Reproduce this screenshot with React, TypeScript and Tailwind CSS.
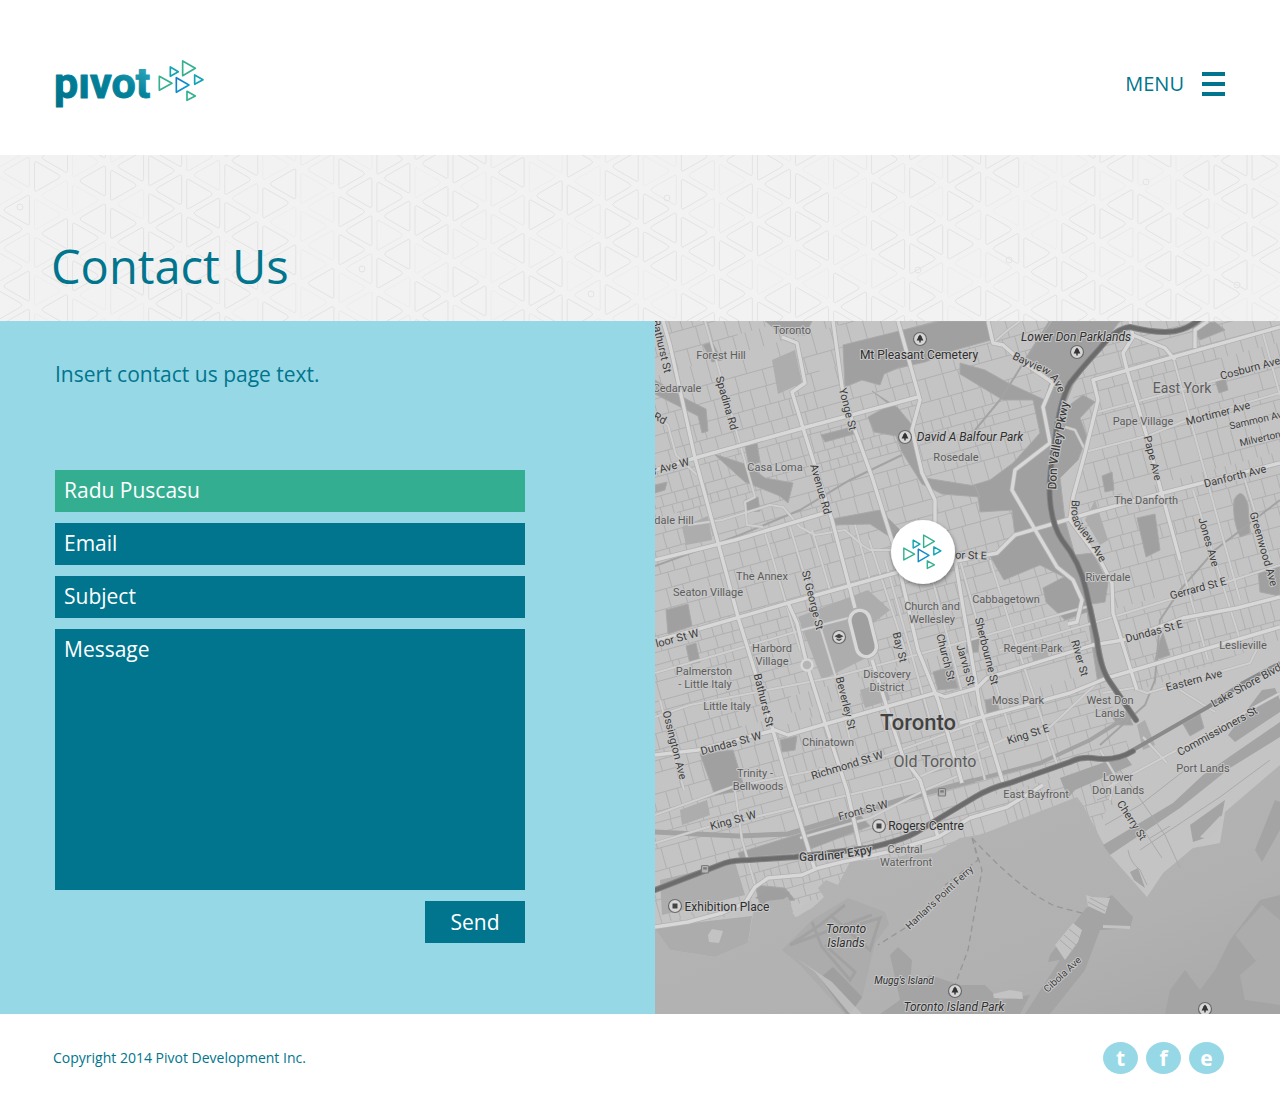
import React from "react";

type Pt = [number, number];

function seeded(seed: number) {
  let s = seed;
  return () => {
    s = (s * 16807) % 2147483647;
    return s / 2147483647;
  };
}

/* ---------- Brand triangles ---------- */

function Triangles() {
  return (
    <g fill="none" strokeWidth="5" strokeLinejoin="round">
      <path d="M428 48V92L466 70Z" stroke="#35b18f" />
      <path d="M391 66V94L415 80Z" stroke="#12a3b4" />
      <path d="M358 94V136L396 115Z" stroke="#35b18f" />
      <path d="M409 98V142L447 120Z" stroke="url(#blueTri)" />
      <path d="M464 90V118L489 104Z" stroke="#12a3b4" />
      <path d="M441 139V166L466 153Z" stroke="#35b18f" />
    </g>
  );
}

function Logo() {
  return (
    <svg className="block h-[60px] w-[150px]" viewBox="55 58 150 60" role="img" aria-label="pivot">
      <defs>
        <linearGradient id="word" x1="0" y1="1" x2="1" y2="0">
          <stop offset="0" stopColor="#00708a" />
          <stop offset="0.6" stopColor="#04839c" />
          <stop offset="1" stopColor="#41b4c8" />
        </linearGradient>
        <linearGradient id="blueTri" x1="0" y1="0" x2="1" y2="1">
          <stop offset="0" stopColor="#1479c9" />
          <stop offset="1" stopColor="#0aa0cf" />
        </linearGradient>
      </defs>
      <text
        x="54"
        y="98"
        fill="url(#word)"
        stroke="url(#word)"
        strokeWidth="1"
        strokeLinejoin="round"
        fontFamily="Roboto, sans-serif"
        fontWeight="700"
        fontSize="43"
      >
        pıvot
      </text>
      <g transform="translate(40 45) scale(0.3333)">
        <Triangles />
      </g>
    </svg>
  );
}

/* ---------- Banner texture ---------- */

const bannerShapes: { d: string; o: number }[] = [];
{
  const rnd = seeded(77);
  const shade = () => {
    const r = rnd();
    return r < 0.25 ? 0.35 : r < 0.45 ? 0.65 : 1;
  };
  for (let k = -1; k < 50; k++) {
    const x = 34.5 + 38.05 * k;
    const base = 161.5 - 14.6 * k;
    const start = base - Math.ceil((base - 110) / 38) * 38;
    for (let y = start; y < 340; y += 38) {
      bannerShapes.push({
        d: `M${x} ${y + 2}Q${x} ${y - 1} ${x + 3} ${y + 1}L${x + 24} ${y + 13}Q${x + 27} ${y + 15} ${x + 24} ${y + 17}L${x + 3} ${y + 29}Q${x} ${y + 31} ${x} ${y + 28}Z`,
        o: shade(),
      });
      const r = x + 33;
      const z = y + 19;
      bannerShapes.push({
        d: `M${r} ${z + 2}Q${r} ${z - 1} ${r - 3} ${z + 1}L${r - 24} ${z + 13}Q${r - 27} ${z + 15} ${r - 24} ${z + 17}L${r - 3} ${z + 29}Q${r} ${z + 31} ${r} ${z + 28}Z`,
        o: shade(),
      });
    }
  }
}

const bannerDots: Pt[] = [
  [20, 207], [362, 269], [591, 294], [667, 198], [918, 270], [1009, 260], [1146, 182], [1237, 285],
];

function BannerTexture() {
  return (
    <svg
      className="absolute inset-0 h-full w-full"
      viewBox="0 155 1280 166"
      preserveAspectRatio="xMidYMid slice"
      aria-hidden="true"
    >
      <g fill="none" stroke="#e3e3e3" strokeWidth="1">
        {bannerShapes.map((s, i) => (
          <path key={i} d={s.d} opacity={s.o} />
        ))}
        {bannerDots.map(([x, y]) => (
          <circle key={x} cx={x} cy={y} r="3" />
        ))}
      </g>
    </svg>
  );
}

/* ---------- Map ---------- */

function streetGrid(seed: number, angle: number, cx: number, cy: number, half: number, rowMin: number, rowMax: number) {
  const rnd = seeded(seed);
  const a = (angle * Math.PI) / 180;
  const ux = Math.cos(a), uy = Math.sin(a);
  const pt = (u: number, v: number) =>
    `${(cx + u * ux - v * uy).toFixed(1)} ${(cy + u * uy + v * ux).toFixed(1)}`;
  let d = "";
  let v = -half;
  while (v < half) {
    const h = rowMin + rnd() * (rowMax - rowMin);
    let u = -half;
    while (u < half) {
      const len = 40 + rnd() * 150;
      if (rnd() < 0.88) d += `M${pt(u, v)}L${pt(u + len, v)}`;
      u += len;
    }
    u = -half + rnd() * 10;
    const gap = 6 + rnd() * 9;
    while (u < half) {
      if (rnd() < 0.85) d += `M${pt(u, v)}L${pt(u, v + h)}`;
      u += gap + rnd() * 6;
    }
    v += h;
  }
  return d;
}

const gridWest = streetGrid(11, -15.5, 850, 560, 470, 9, 24);
const gridEast = streetGrid(29, -15, 1180, 520, 420, 8, 26);

const parks = [
  "M843 345L940 321H988L991 340L955 350L925 362L898 368L884 374L880 385L862 380L845 387Z",
  "M1052 321H1120L1095 353L1073 385L1063 410L1083 395L1095 402L1080 418L1087 437L1078 460L1060 478L1065 520L1075 555L1093 553L1108 583L1105 602L1092 604L1099 640L1108 680L1098 684L1087 612L1065 620L1046 602L1043 588L1064 577L1040 565L1004 580L990 556L1015 536L1012 510L980 512L978 497L960 489L990 480L1013 463L1040 433L1033 400L1003 400L960 374L960 363L985 370L1008 383L1045 400L1050 382L1027 357Z",
  "M872 391L898 408L912 425L925 478L975 486L980 497L942 494L922 484L902 452L896 436L874 432L868 417L890 405Z",
  "M655 380L688 400L706 409L708 431L702 433L698 416L655 394Z",
  "M714 454L748 465L765 478L793 483L788 503L780 496L745 482Z",
  "M821 435L852 427L854 434L825 442Z",
  "M745 446L757 443L760 462L749 466Z",
  "M745 500L758 497L760 511L746 512Z",
  "M832 519L880 510L900 530L898 542L870 524L834 525Z",
  "M666 610L688 604L692 626L668 634Z",
  "M686 646L696 643L700 662L690 664Z",
  "M700 754L733 750L745 790L715 795Z",
  "M780 740L797 736L795 750L782 752Z",
  "M1137 518L1155 514L1160 550L1146 557Z",
  "M1102 476L1112 472L1114 490L1105 492Z",
  "M1234 500Q1242 485 1248 505L1250 533L1240 537Q1232 520 1234 500Z",
  "M1258 572L1280 565V596L1260 592Z",
  "M1183 724L1200 714L1204 728L1190 736Z",
  "M933 672L952 666L958 688L938 690Z",
  "M967 640L980 636L978 652L966 653Z",
  "M738 853L860 815L870 826L800 853L740 858Z",
  "M765 321H812L805 335L780 333Z",
  "M703 345L712 342L722 360L712 362Z",
  "M1215 380L1225 377L1228 390L1219 393Z",
  "M1190 325L1215 322L1225 330L1200 340Z",
  "M755 885L785 888L795 900L760 905Z",
  "M1107 710L1127 712L1133 725L1118 725Z",
  "M1160 640L1163 633L1170 655L1155 660Z",
  "M655 485L667 482L665 490L655 493Z",
  "M985 700L995 698L1000 712L987 714Z",
];

const softParks = [
  "M772 360L795 350L802 383L778 394Z",
  "M682 527L708 516L712 540L686 545Z",
  "M798 617L868 590L890 610L872 624L876 653L822 680L802 627Z",
  "M680 810L707 800L710 815L682 825Z",
  "M660 880L735 862L745 895L662 915Z",
  "M1137 725L1145 720L1155 745L1143 750Z",
  "M1030 650L1045 645L1050 660L1034 664Z",
  "M1095 500L1108 540L1100 545L1085 520Z",
  "M860 690L885 682L890 700L865 708Z",
];

const thinRoads = [
  "M705 321L738 437L755 497L745 502L747 525L763 527",
  "M688 525L722 520L770 505L783 507L800 527L815 535L845 530L862 545L870 550L895 550",
  "M765 533L800 650M790 527L812 600L836 678L850 740",
  "M655 673L802 630L852 617",
  "M655 717L690 705L835 677L945 647L1093 605",
  "M812 530L830 590M855 525L870 580",
  "M869 540L905 650M885 560L930 720",
  "M1173 357L1207 480L1240 600M1262 330L1280 395",
  "M1098 412L1217 380L1280 362",
  "M1085 452L1150 435L1187 420L1280 393",
  "M1000 650L1093 623L1227 582L1280 565",
  "M1180 560L1208 660M1193 490L1215 560L1240 640M1245 480L1270 560",
  "M960 560L985 650L1010 730M990 560L1015 640L1058 767M930 570L985 780",
  "M1103 693L1133 688L1147 693L1250 663L1260 643",
  "M1103 790L1177 750L1280 693",
  "M1143 737L1167 763M1100 750L1115 775L1110 800",
  "M735 790L742 840L755 885",
  "M655 815L732 787L882 757L975 723",
  "M655 843L708 827L755 817L912 780L1010 737L1050 727L1097 683",
  "M800 838L870 818L925 790L960 775",
  "M655 415L668 425L676 455L697 475",
  "M993 343L1008 330L1020 321M1065 427L1075 430L1085 450",
  "M660 700L684 790M1180 690L1215 712",
];

const majorRoads = [
  "M663 321L670 345L695 458L720 550L738 617L772 727L790 790L815 870",
  "M782 337L797 343L805 383L792 392L803 428L832 520L855 608",
  "M872 660L895 733L903 757L920 780L938 837",
  "M833 321L842 387L855 430L872 477L895 550L918 650L938 700L962 783",
  "M898 321L920 400L912 430L922 473L935 500V525L945 550",
  "M655 470L695 458L803 428L918 397",
  "M655 560L735 540L828 512",
  "M655 641L695 630L788 603L895 573L997 553L1015 535L1093 512L1163 493L1280 463",
  "M788 603L797 623L807 665L825 723L847 790L860 847",
  "M655 755L698 750L775 730L788 735L822 725L935 693L945 697L977 688L987 678L1093 645L1123 640L1183 618L1237 608L1280 597",
  "M960 723L1070 693L1107 678L1280 627",
  "M1130 321L1133 337L1123 353L1127 370L1147 437L1160 487L1180 560",
  "M1280 327L1173 357L1093 380L1098 400L1085 453L1073 497L1070 520L1100 560L1112 583L1113 613L1137 690",
  "M1133 335L1165 348L1175 360M1208 321L1195 330L1195 348",
  "M988 321L993 343L1003 345L1020 360L1053 383L1043 407L1050 443L1015 470L1012 490L1037 533L1057 567L1073 580L1082 600L1077 622L1068 624",
  "M955 560L980 707L1003 783",
  "M655 927L688 922L722 913L745 903L755 887L768 878L802 875L818 868L842 862L888 852L938 837L970 818L1007 807L1043 785",
];

const highways = [
  "M1200 319Q1185 332 1165 332Q1150 332 1130 327Q1115 329 1100 348Q1080 370 1070 383Q1060 400 1055 440Q1048 480 1050 500Q1052 525 1062 540Q1080 562 1086 590L1097 640Q1100 668 1110 682L1136 720",
  "M650 892L725 863Q735 860 750 860L795 857L868 848Q905 840 920 830L975 797Q990 788 1010 783L1070 762Q1080 757 1092 758Q1115 762 1133 751",
];

const streetLabels: { t: string; x: number; y: number; r: number; s?: number }[] = [
  { t: "Bathurst St", x: 662, y: 346, r: 77 },
  { t: "Spadina Rd", x: 727, y: 403, r: 74 },
  { t: "Yonge St", x: 848, y: 409, r: 76 },
  { t: "Avenue Rd", x: 821, y: 489, r: 74 },
  { t: "r Ave W", x: 671, y: 466, r: -15 },
  { t: "Rd", x: 660, y: 418, r: 28 },
  { t: "St George St", x: 813, y: 600, r: 76 },
  { t: "loor St W", x: 677, y: 638, r: -15 },
  { t: "Bay St", x: 900, y: 647, r: 76 },
  { t: "Church St", x: 946, y: 657, r: 76 },
  { t: "Jarvis St", x: 966, y: 665, r: 74 },
  { t: "Sherbourne St", x: 987, y: 651, r: 76 },
  { t: "River St", x: 1080, y: 658, r: 74 },
  { t: "Bathurst St", x: 764, y: 700, r: 76 },
  { t: "Beverley St", x: 846, y: 703, r: 76 },
  { t: "Ossington Ave", x: 675, y: 745, r: 76 },
  { t: "Dundas St W", x: 731, y: 743, r: -15 },
  { t: "Richmond St W", x: 847, y: 765, r: -17 },
  { t: "King St W", x: 733, y: 820, r: -15 },
  { t: "Front St W", x: 863, y: 810, r: -15 },
  { t: "King St E", x: 1028, y: 734, r: -18 },
  { t: "Dundas St E", x: 1154, y: 631, r: -15 },
  { t: "Gerrard St E", x: 1198, y: 588, r: -15 },
  { t: "Eastern Ave", x: 1194, y: 680, r: -15 },
  { t: "Lake Shore Blvd", x: 1246, y: 685, r: -29 },
  { t: "Commissioners St", x: 1217, y: 731, r: -29 },
  { t: "Cherry St", x: 1132, y: 820, r: 57 },
  { t: "Cosburn Ave", x: 1250, y: 368, r: -15 },
  { t: "Mortimer Ave", x: 1218, y: 413, r: -15 },
  { t: "Sammon Ave", x: 1258, y: 419, r: -13, s: 10 },
  { t: "Milverton", x: 1260, y: 438, r: -13, s: 10 },
  { t: "Pape Ave", x: 1153, y: 458, r: 76 },
  { t: "Danforth Ave", x: 1235, y: 476, r: -14 },
  { t: "Jones Ave", x: 1209, y: 542, r: 74 },
  { t: "Greenwood Ave", x: 1264, y: 549, r: 74 },
  { t: "or St E", x: 971, y: 555, r: 2 },
  { t: "Hanlan's Point Ferry", x: 939, y: 897, r: -43, s: 10 },
  { t: "Cibola Ave", x: 1062, y: 974, r: -43, s: 10 },
];

const areaLabels: { t: string; x: number; y: number; s?: number }[] = [
  { t: "Toronto", x: 792, y: 330 },
  { t: "Forest Hill", x: 721, y: 355 },
  { t: "Cedarvale", x: 677, y: 388 },
  { t: "Casa Loma", x: 775, y: 467 },
  { t: "dale Hill", x: 674, y: 520 },
  { t: "Rosedale", x: 956, y: 457 },
  { t: "East York", x: 1182, y: 388, s: 14 },
  { t: "Pape Village", x: 1143, y: 421 },
  { t: "The Danforth", x: 1146, y: 500 },
  { t: "The Annex", x: 762, y: 576 },
  { t: "Seaton Village", x: 708, y: 592 },
  { t: "Riverdale", x: 1108, y: 577 },
  { t: "Cabbagetown", x: 1006, y: 599 },
  { t: "Church and", x: 932, y: 606 },
  { t: "Wellesley", x: 932, y: 619 },
  { t: "Harbord", x: 772, y: 648 },
  { t: "Village", x: 772, y: 661 },
  { t: "Palmerston", x: 704, y: 671 },
  { t: "- Little Italy", x: 705, y: 684 },
  { t: "Little Italy", x: 727, y: 706 },
  { t: "Discovery", x: 887, y: 674 },
  { t: "District", x: 887, y: 687 },
  { t: "Regent Park", x: 1033, y: 648 },
  { t: "Leslieville", x: 1243, y: 645 },
  { t: "Moss Park", x: 1018, y: 700 },
  { t: "West Don", x: 1110, y: 700 },
  { t: "Lands", x: 1110, y: 713 },
  { t: "Chinatown", x: 828, y: 742 },
  { t: "Old Toronto", x: 935, y: 762, s: 16 },
  { t: "Trinity -", x: 755, y: 773 },
  { t: "Bellwoods", x: 758, y: 786 },
  { t: "East Bayfront", x: 1036, y: 794 },
  { t: "Lower", x: 1118, y: 777 },
  { t: "Don Lands", x: 1118, y: 790 },
  { t: "Port Lands", x: 1203, y: 768 },
  { t: "Central", x: 905, y: 849 },
  { t: "Waterfront", x: 906, y: 862 },
];

const poiLabels: { t: string; x: number; y: number; i?: boolean; s?: number }[] = [
  { t: "Mt Pleasant Cemetery", x: 919, y: 355 },
  { t: "Rogers Centre", x: 926, y: 826 },
  { t: "Exhibition Place", x: 727, y: 907 },
  { t: "Lower Don Parklands", x: 1076, y: 337, i: true },
  { t: "David A Balfour Park", x: 970, y: 437, i: true },
  { t: "Toronto", x: 846, y: 929, i: true },
  { t: "Islands", x: 846, y: 943, i: true },
  { t: "Mugg's Island", x: 904, y: 980, i: true, s: 10 },
  { t: "Toronto Island Park", x: 954, y: 1007, i: true },
];

const treePins: Pt[] = [[920, 339], [1077, 352], [905, 437], [955, 991], [1205, 1009]];
const squarePins: Pt[] = [[879, 826], [675, 906]];
const stationPins: Pt[] = [[705, 869], [942, 792]];

function TorontoMap() {
  return (
    <svg
      className="block h-full w-full"
      viewBox="655 321 625 693"
      preserveAspectRatio="xMidYMid slice"
      role="img"
      aria-label="Map of Toronto"
    >
      <defs>
        <clipPath id="west">
          <path d="M655 321H1050L1035 440L1010 480L1060 560L1110 700L1130 750L1090 850L655 930Z" />
        </clipPath>
        <clipPath id="east">
          <path d="M1120 321H1280V640L1140 690L1108 600L1075 520L1085 440L1070 385Z" />
        </clipPath>
        <linearGradient id="lake" x1="0" y1="0" x2="1" y2="1">
          <stop offset="0" stopColor="#a9a9a9" />
          <stop offset="0.35" stopColor="#b3b3b3" />
          <stop offset="0.7" stopColor="#b1b1b1" />
          <stop offset="1" stopColor="#a8a8a8" />
        </linearGradient>
        <filter id="shadow" x="-30%" y="-30%" width="160%" height="160%">
          <feDropShadow dx="1" dy="2" stdDeviation="2" floodOpacity="0.4" />
        </filter>
        <path id="bayview" d="M1009 357Q1030 368 1042 372Q1056 380 1059 396" />
        <path id="broadview" d="M1073 494Q1068 518 1078 530Q1092 545 1103 568" />
        <path id="dvp" d="M1056 496L1057 465L1070 396" />
        <path id="gardiner" d="M795 861Q830 862 877 852" />
      </defs>

      <rect x="655" y="321" width="625" height="693" fill="#c4c4c4" />

      <g fill="none" stroke="#b0b0b0" strokeWidth="1">
        <path d={gridWest} clipPath="url(#west)" />
        <path d={gridEast} clipPath="url(#east)" />
      </g>

      <g fill="#adadad">
        {softParks.map((d) => <path key={d} d={d} />)}
      </g>
      <g fill="#a0a0a0" stroke="#a9a9a9" strokeWidth="1">
        {parks.map((d) => <path key={d} d={d} />)}
      </g>

      {/* railway corridors */}
      <g fill="none" stroke="#a3a3a3">
        <path strokeWidth="2" d="M655 566L740 535L800 510L850 480L902 455" />
        <path strokeWidth="2" d="M1050 321L1000 400L975 430M1280 500L1215 550L1180 590L1160 620L1155 680L1145 705L1100 745" />
        <path strokeWidth="5" d="M655 832L738 836L788 834L900 800L975 780" />
        <path strokeWidth="4" d="M975 780L1040 763L1090 740L1130 715" />
      </g>

      {/* lake */}
      <path
        fill="url(#lake)"
        d="M655 929L670 950L715 957L748 943L753 913L768 900L788 897L795 917L812 908L824 897L818 888L826 880L838 885L850 862L935 853L960 838L972 836L980 835L1018 820L1077 797L1083 805L1103 843L1110 855L1147 897L1163 873L1193 848L1220 843L1225 812L1280 765V1014H655Z"
      />
      <g fill="#a4a4a4">
        <path d="M1103 845L1173 803L1203 775L1280 722V737L1230 768L1180 808L1110 855Z" />
        <path d="M1060 778L1125 755L1132 765L1075 790L1068 798Z" />
        <path d="M1228 735L1262 690L1275 688L1280 700V712L1235 742Z" />
        <path d="M1190 825L1225 800L1222 815L1205 838L1193 842Z" />
        <path d="M1130 872L1138 868L1145 888L1134 880Z" />
        <path d="M1255 850L1275 800L1280 802V830L1262 862Z" />
        <path d="M1230 940L1260 900L1280 895V960L1262 950L1245 980L1280 1000V1014H1165L1170 990L1185 970L1200 990L1215 970Z" />
        <path d="M890 955L898 947L912 960L910 985L930 975L960 985L985 985L1000 1000L1030 995L1020 1014H880L900 1000Z" />
        <path d="M1086 908L1112 895L1133 917L1130 928L1100 930L1085 970L1050 1014H1025L1060 960L1048 962L1050 955Z" />
      </g>
      <g fill="#acacac">
        <path d="M655 929L670 950L715 957L748 943L752 916L700 922Z" />
        <path d="M782 950L812 920L848 898L885 912L889 924L875 943L862 998L850 1014H845L800 965Z" />
        <path d="M1235 935L1262 905L1280 920V950L1255 960Z" />
        <path d="M1240 975L1280 940V1005L1245 1000Z" />
      </g>
      <g fill="#9f9f9f">
        <path d="M820 978L833 967L862 997L850 1014H846Z" />
        <path d="M755 898L768 890L790 892L784 899L766 901Z" />
      </g>
      <g fill="none" stroke="#a2a2a2" strokeWidth="3">
        <path d="M790 945L872 915M790 945L820 925L845 905M812 922L822 947L850 980L855 972L825 945M830 915L870 950L880 918L840 930" />
      </g>
      <g fill="#c3c3c3">
        <path d="M796 958L815 972L850 1014H862L832 982Z" opacity="0.8" />
        <path d="M792 913L812 900L818 903L797 917Z" />
        <path d="M708 935L712 929L723 931L719 943L709 942Z" />
        <path d="M1086 895L1092 897L1110 898L1105 914L1088 906Z" />
        <path d="M1055 945L1073 923L1082 930L1078 942L1065 960Z" />
        <path d="M1103 925L1130 926V929L1103 928Z" />
        <path d="M1200 837L1220 816L1224 820L1210 840Z" />
        <path d="M993 994L1010 990L1022 992L1023 999L994 998Z" />
      </g>
      <g fill="none" stroke="#aaaaaa" strokeWidth="1">
        <path d="M1060 940L1073 951M1064 935L1077 946M1069 929L1080 938M1090 898L1107 907M1088 902L1105 911" />
        <path d="M1120 770L1165 835L1180 868M1140 850L1220 797L1270 760M1128 850Q1130 862 1140 870L1147 885M1097 800L1110 795L1112 805M1145 832L1162 858M1150 838L1170 826M1105 825L1140 805L1185 770" />
      </g>
      <path
        fill="none"
        stroke="#969696"
        strokeWidth="1.3"
        strokeDasharray="6 4"
        d="M972 838L982 870L968 950L955 985M972 838L978 860L945 885M905 928L878 945M972 838Q1020 890 1055 906L1085 914"
      />

      {/* streets */}
      <g fill="none" strokeLinejoin="round">
        <g stroke="#b4b4b4" strokeWidth="3">
          {thinRoads.map((d) => <path key={d} d={d} />)}
        </g>
        <g stroke="#d0d0d0" strokeWidth="2">
          {thinRoads.map((d) => <path key={d} d={d} />)}
        </g>
        <g stroke="#b1b1b1" strokeWidth="5">
          {majorRoads.map((d) => <path key={d} d={d} />)}
          <rect x="853" y="610" width="20" height="47" rx="10" transform="rotate(-14 863 633)" />
        </g>
        <g stroke="#d8d8d8" strokeWidth="3.4">
          {majorRoads.map((d) => <path key={d} d={d} />)}
          <rect x="853" y="610" width="20" height="47" rx="10" transform="rotate(-14 863 633)" fill="#9f9f9f" />
          <circle cx="807" cy="665" r="5.5" fill="#b5b5b5" strokeWidth="2.4" />
        </g>
        <path stroke="#8a8a8a" d="M1133 750L1208 707L1243 683L1280 663" strokeWidth="4" />
        <g stroke="#858585" strokeWidth="6" strokeLinecap="round">
          {highways.map((d) => <path key={d} d={d} />)}
        </g>
        <g stroke="#6c6c6c" strokeWidth="4" strokeLinecap="round">
          {highways.map((d) => <path key={d} d={d} />)}
        </g>
      </g>

      {/* labels */}
      <g
        fontFamily="Roboto, sans-serif"
        textAnchor="middle"
        stroke="#c8c8c8"
        strokeWidth="2"
        strokeLinejoin="round"
        style={{ paintOrder: "stroke" }}
      >
        <g fill="#3c3c3c" fontSize="11">
          {streetLabels.map((l) => (
            <text key={l.t + l.x} fontSize={l.s ?? 11} transform={`translate(${l.x} ${l.y}) rotate(${l.r})`} y="4">
              {l.t}
            </text>
          ))}
          <text><textPath href="#bayview" startOffset="50%">Bayview Ave</textPath></text>
          <text><textPath href="#broadview" startOffset="50%">Broadview Ave</textPath></text>
          <text fontWeight="500" fontSize="12"><textPath href="#dvp" startOffset="50%">Don Valley Pkwy</textPath></text>
          <text fontWeight="500" fontSize="12"><textPath href="#gardiner" startOffset="50%">Gardiner Expy</textPath></text>
        </g>
        <g fill="#5c5c5c">
          {areaLabels.map((l) => (
            <text key={l.t + l.x} fontSize={l.s ?? 11} x={l.x} y={l.y + (l.s ? 5 : 4)}>
              {l.t}
            </text>
          ))}
        </g>
        <g fill="#2e2e2e">
          {poiLabels.map((l) => (
            <text key={l.t + l.x} fontSize={l.s ?? 12} x={l.x} y={l.y + 4} fontStyle={l.i ? "italic" : "normal"}>
              {l.t}
            </text>
          ))}
          <text x="918" y="730" fontSize="22" fontWeight="500" fill="#424242">Toronto</text>
        </g>
      </g>

      {/* points of interest */}
      <g fill="#d6d6d6" stroke="#6a6a6a" strokeWidth="1.2">
        {treePins.map(([x, y]) => (
          <g key={x} transform={`translate(${x} ${y})`}>
            <circle r="6.5" />
            <path d="M0 -4.5L2 -2L1.8 -1.8L3.4 1.6H0.7V3.6H-0.7V1.6H-3.4L-1.8 -1.8L-2 -2Z" fill="#333333" stroke="none" />
          </g>
        ))}
        {squarePins.map(([x, y]) => (
          <g key={x} transform={`translate(${x} ${y})`}>
            <circle r="6.5" />
            <rect x="-2.5" y="-2.5" width="5" height="5" fill="#444444" stroke="none" />
          </g>
        ))}
        <g transform="translate(839 637)">
          <circle r="6.5" />
          <path d="M-4.5 -0.8L0 -3.2L4.5 -0.8L0 1.6ZM-2.5 1.3L0 2.6L2.5 1.3V2.8L0 4L-2.5 2.8Z" fill="#444444" stroke="none" />
        </g>
        {stationPins.map(([x, y]) => (
          <g key={x} transform={`translate(${x} ${y})`}>
            <rect x="-3.5" y="-3.5" width="7" height="7.5" rx="1" fill="#b5b5b5" stroke="#7c7c7c" />
            <rect x="-1.8" y="-1.8" width="3.6" height="2.4" fill="#7c7c7c" stroke="none" />
          </g>
        ))}
      </g>

      {/* office marker */}
      <circle cx="923" cy="552" r="32" fill="#ffffff" filter="url(#shadow)" />
      <g transform="translate(802.5 521.5) scale(0.283)">
        <Triangles />
      </g>
    </svg>
  );
}

/* ---------- Page ---------- */

const field =
  "block w-full border-0 px-[9px] text-[21px] leading-[28px] text-white placeholder:text-white placeholder:opacity-100 focus:outline-none";

export default function App() {
  return (
    <div className="w-full bg-white font-['Open_Sans',sans-serif] text-[#00758d]">
      <header className="flex items-start justify-between px-[55px] pt-[58px] pb-[37px]">
        <a href="#home" aria-label="Pivot home">
          <Logo />
        </a>
        <button type="button" className="mt-[12px] flex items-center gap-[18px] text-[20px] leading-[28px]">
          MENU
          <span className="flex w-[23px] flex-col gap-[6px]" aria-hidden="true">
            <span className="h-[4px] bg-[#00758d]" />
            <span className="h-[4px] bg-[#00758d]" />
            <span className="h-[4px] bg-[#00758d]" />
          </span>
        </button>
      </header>

      <section className="relative overflow-hidden bg-[#f2f2f2] px-[51px] pt-[81px] pb-[25px]">
        <BannerTexture />
        <h1 className="relative text-[47px] leading-[60px] font-normal">Contact Us</h1>
      </section>

      <main className="grid grid-cols-[655fr_625fr]">
        <section className="bg-[#97d8e6] px-[55px] pt-[39px] pb-[71px]">
          <p className="text-[21px] leading-[28px]">Insert contact us page text.</p>
          <form className="mt-[82px] flex max-w-[470px] flex-col gap-[11px]" onSubmit={(e) => e.preventDefault()}>
            <input aria-label="Name" defaultValue="Radu Puscasu" className={`${field} h-[42px] bg-[#33ae91] pb-[2px]`} />
            <input aria-label="Email" type="email" placeholder="Email" className={`${field} h-[42px] bg-[#00758d] pb-[2px]`} />
            <input aria-label="Subject" placeholder="Subject" className={`${field} h-[42px] bg-[#00758d] pb-[2px]`} />
            <textarea aria-label="Message" placeholder="Message" className={`${field} h-[261px] resize-none bg-[#00758d] py-[6px]`} />
            <button type="submit" className="h-[42px] w-[100px] self-end bg-[#00758d] text-[21px] leading-[28px] text-white">
              Send
            </button>
          </form>
        </section>
        <TorontoMap />
      </main>

      <footer className="flex items-center justify-between pt-[28px] pr-[56px] pb-[38px] pl-[53px]">
        <p className="text-[14px] leading-[20px]">Copyright 2014 Pivot Development Inc.</p>
        <nav className="flex gap-[8px]" aria-label="Social links">
          {[["t", "Twitter"], ["f", "Facebook"], ["e", "Email"]].map(([c, label]) => (
            <a
              key={c}
              href={`#${label.toLowerCase()}`}
              aria-label={label}
              className="flex h-[32px] w-[35px] items-center justify-center rounded-[50%] bg-[#97d8e6] text-[21px] leading-[28px] font-bold text-white"
            >
              {c}
            </a>
          ))}
        </nav>
      </footer>
    </div>
  );
}
